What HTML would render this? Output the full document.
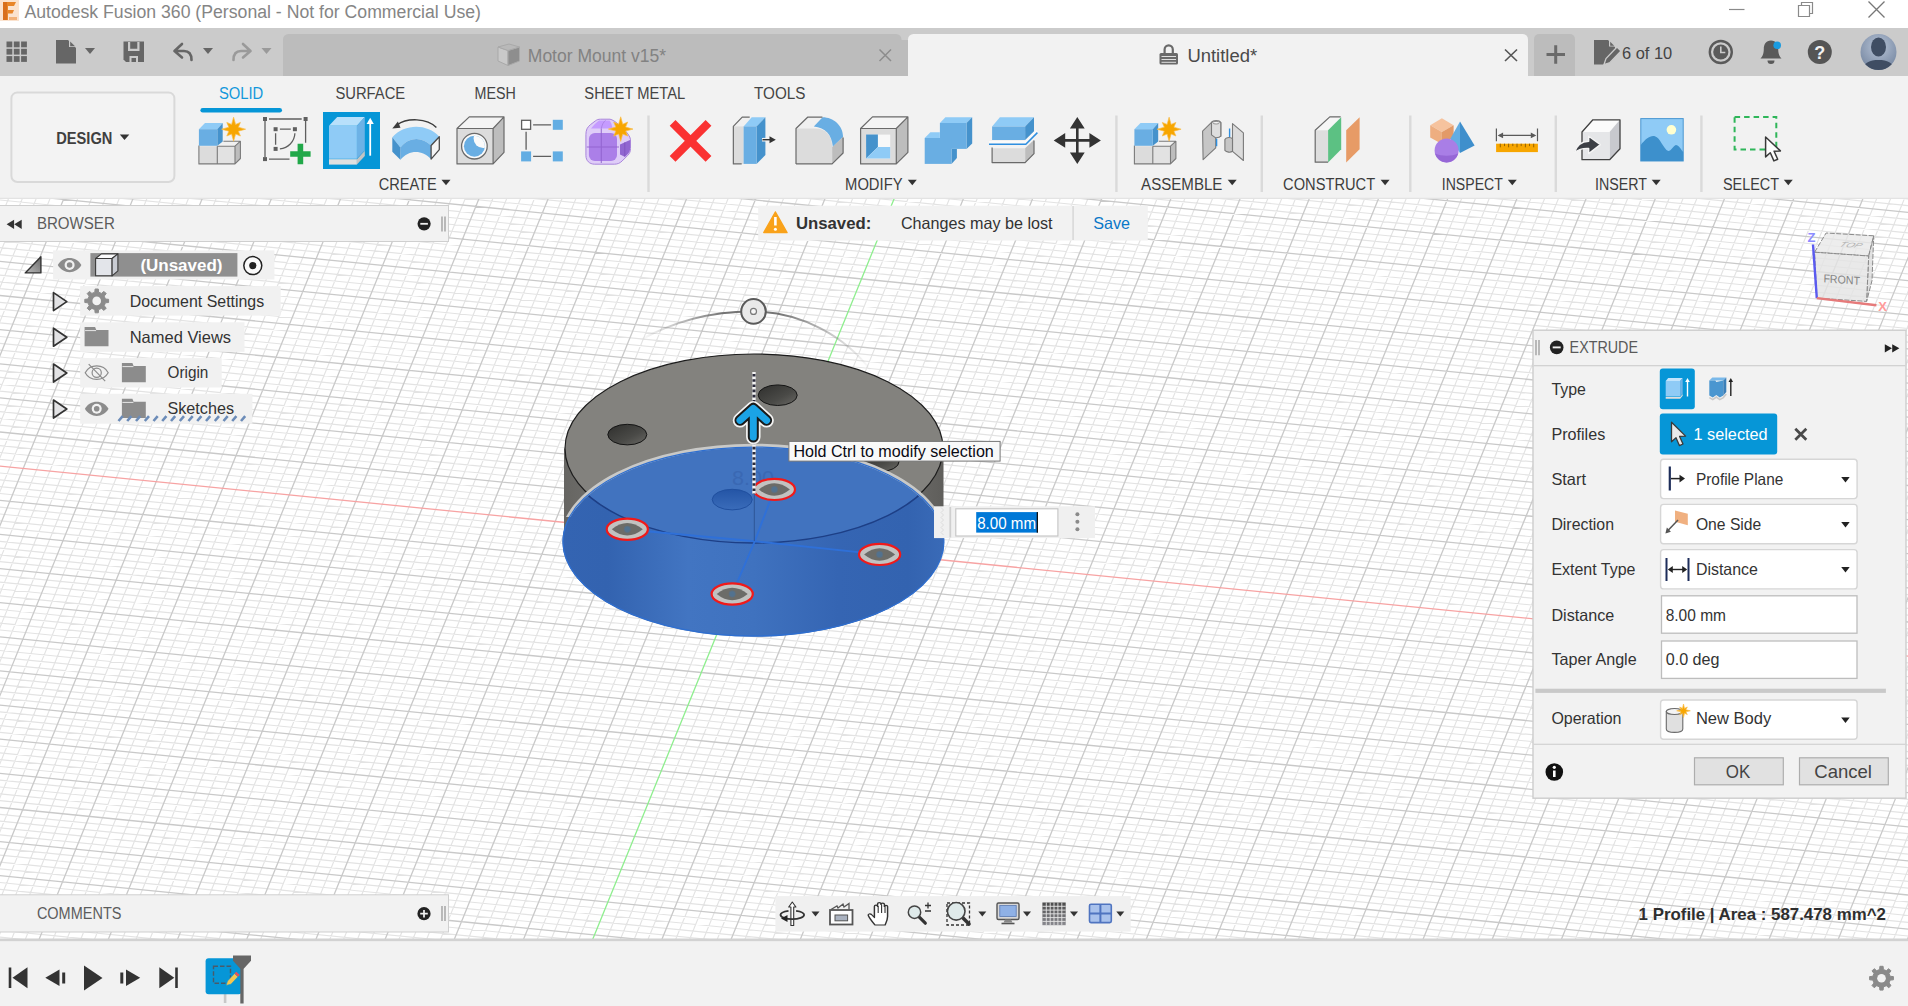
<!DOCTYPE html>
<html lang="en"><head><meta charset="utf-8"><title>Autodesk Fusion 360 (Personal - Not for Commercial Use)</title>
<style>
html,body{margin:0;padding:0;background:#fff;overflow:hidden}
body{width:1908px;height:1006px;font-family:'Liberation Sans', sans-serif}
svg{display:block;font-family:'Liberation Sans', sans-serif}
text{white-space:pre}
</style></head><body>
<svg width="1908" height="1006" viewBox="0 0 1908 1006">
<rect x="0.0" y="0.0" width="1908.0" height="1006.0" fill="#ffffff" />
<clipPath id="vp"><rect x="0" y="198" width="1908" height="742"/></clipPath>
<g clip-path="url(#vp)" fill="none">
<path d="M10.8 193.0L-295.3 945.0M24.6 193.0L-281.5 945.0M38.5 193.0L-267.6 945.0M52.3 193.0L-253.8 945.0M80.0 193.0L-226.1 945.0M93.8 193.0L-212.3 945.0M107.6 193.0L-198.4 945.0M121.5 193.0L-184.6 945.0M149.2 193.0L-156.9 945.0M163.0 193.0L-143.1 945.0M176.8 193.0L-129.2 945.0M190.7 193.0L-115.4 945.0M218.4 193.0L-87.7 945.0M232.2 193.0L-73.9 945.0M246.0 193.0L-60.0 945.0M259.9 193.0L-46.2 945.0M287.6 193.0L-18.5 945.0M301.4 193.0L-4.7 945.0M315.2 193.0L9.2 945.0M329.1 193.0L23.0 945.0M356.7 193.0L50.7 945.0M370.6 193.0L64.5 945.0M384.4 193.0L78.4 945.0M398.3 193.0L92.2 945.0M425.9 193.0L119.9 945.0M439.8 193.0L133.7 945.0M453.6 193.0L147.5 945.0M467.5 193.0L161.4 945.0M495.1 193.0L189.1 945.0M509.0 193.0L202.9 945.0M522.8 193.0L216.7 945.0M536.7 193.0L230.6 945.0M564.3 193.0L258.3 945.0M578.2 193.0L272.1 945.0M592.0 193.0L285.9 945.0M605.8 193.0L299.8 945.0M633.5 193.0L327.5 945.0M647.4 193.0L341.3 945.0M661.2 193.0L355.1 945.0M675.0 193.0L369.0 945.0M702.7 193.0L396.6 945.0M716.6 193.0L410.5 945.0M730.4 193.0L424.3 945.0M744.2 193.0L438.2 945.0M771.9 193.0L465.8 945.0M785.8 193.0L479.7 945.0M799.6 193.0L493.5 945.0M813.4 193.0L507.4 945.0M841.1 193.0L535.0 945.0M854.9 193.0L548.9 945.0M868.8 193.0L562.7 945.0M882.6 193.0L576.6 945.0M910.3 193.0L604.2 945.0M924.1 193.0L618.1 945.0M938.0 193.0L631.9 945.0M951.8 193.0L645.7 945.0M979.5 193.0L673.4 945.0M993.3 193.0L687.3 945.0M1007.2 193.0L701.1 945.0M1021.0 193.0L714.9 945.0M1048.7 193.0L742.6 945.0M1062.5 193.0L756.5 945.0M1076.4 193.0L770.3 945.0M1090.2 193.0L784.1 945.0M1117.9 193.0L811.8 945.0M1131.7 193.0L825.7 945.0M1145.6 193.0L839.5 945.0M1159.4 193.0L853.3 945.0M1187.1 193.0L881.0 945.0M1200.9 193.0L894.8 945.0M1214.8 193.0L908.7 945.0M1228.6 193.0L922.5 945.0M1256.3 193.0L950.2 945.0M1270.1 193.0L964.0 945.0M1284.0 193.0L977.9 945.0M1297.8 193.0L991.7 945.0M1325.5 193.0L1019.4 945.0M1339.3 193.0L1033.2 945.0M1353.1 193.0L1047.1 945.0M1367.0 193.0L1060.9 945.0M1394.7 193.0L1088.6 945.0M1408.5 193.0L1102.4 945.0M1422.3 193.0L1116.3 945.0M1436.2 193.0L1130.1 945.0M1463.9 193.0L1157.8 945.0M1477.7 193.0L1171.6 945.0M1491.5 193.0L1185.5 945.0M1505.4 193.0L1199.3 945.0M1533.1 193.0L1227.0 945.0M1546.9 193.0L1240.8 945.0M1560.7 193.0L1254.7 945.0M1574.6 193.0L1268.5 945.0M1602.2 193.0L1296.2 945.0M1616.1 193.0L1310.0 945.0M1629.9 193.0L1323.9 945.0M1643.8 193.0L1337.7 945.0M1671.4 193.0L1365.4 945.0M1685.3 193.0L1379.2 945.0M1699.1 193.0L1393.0 945.0M1713.0 193.0L1406.9 945.0M1740.6 193.0L1434.6 945.0M1754.5 193.0L1448.4 945.0M1768.3 193.0L1462.2 945.0M1782.2 193.0L1476.1 945.0M1809.8 193.0L1503.8 945.0M1823.7 193.0L1517.6 945.0M1837.5 193.0L1531.4 945.0M1851.3 193.0L1545.3 945.0M1879.0 193.0L1572.9 945.0M1892.9 193.0L1586.8 945.0M1906.7 193.0L1600.6 945.0M1920.5 193.0L1614.5 945.0M1948.2 193.0L1642.1 945.0M1962.1 193.0L1656.0 945.0M1975.9 193.0L1669.8 945.0M1989.7 193.0L1683.7 945.0M2017.4 193.0L1711.3 945.0M2031.3 193.0L1725.2 945.0M2045.1 193.0L1739.0 945.0M2058.9 193.0L1752.9 945.0M2086.6 193.0L1780.5 945.0M2100.4 193.0L1794.4 945.0M2114.3 193.0L1808.2 945.0M2128.1 193.0L1822.0 945.0M2155.8 193.0L1849.7 945.0M2169.6 193.0L1863.6 945.0M2183.5 193.0L1877.4 945.0M2197.3 193.0L1891.2 945.0M-5.0 8.3L1913.0 199.3M-5.0 15.2L1913.0 206.1M-5.0 28.8L1913.0 219.8M-5.0 35.6L1913.0 226.6M-5.0 42.5L1913.0 233.4M-5.0 49.3L1913.0 240.2M-5.0 63.0L1913.0 253.9M-5.0 69.8L1913.0 260.7M-5.0 76.6L1913.0 267.5M-5.0 83.4L1913.0 274.4M-5.0 97.1L1913.0 288.0M-5.0 103.9L1913.0 294.8M-5.0 110.7L1913.0 301.7M-5.0 117.6L1913.0 308.5M-5.0 131.2L1913.0 322.1M-5.0 138.0L1913.0 329.0M-5.0 144.9L1913.0 335.8M-5.0 151.7L1913.0 342.6M-5.0 165.3L1913.0 356.3M-5.0 172.2L1913.0 363.1M-5.0 179.0L1913.0 369.9M-5.0 185.8L1913.0 376.7M-5.0 199.5L1913.0 390.4M-5.0 206.3L1913.0 397.2M-5.0 213.1L1913.0 404.1M-5.0 219.9L1913.0 410.9M-5.0 233.6L1913.0 424.5M-5.0 240.4L1913.0 431.4M-5.0 247.2L1913.0 438.2M-5.0 254.1L1913.0 445.0M-5.0 267.7L1913.0 458.7M-5.0 274.6L1913.0 465.5M-5.0 281.4L1913.0 472.3M-5.0 288.2L1913.0 479.1M-5.0 301.9L1913.0 492.8M-5.0 308.7L1913.0 499.6M-5.0 315.5L1913.0 506.4M-5.0 322.3L1913.0 513.3M-5.0 336.0L1913.0 526.9M-5.0 342.8L1913.0 533.7M-5.0 349.6L1913.0 540.6M-5.0 356.5L1913.0 547.4M-5.0 370.1L1913.0 561.0M-5.0 376.9L1913.0 567.9M-5.0 383.8L1913.0 574.7M-5.0 390.6L1913.0 581.5M-5.0 404.2L1913.0 595.2M-5.0 411.1L1913.0 602.0M-5.0 417.9L1913.0 608.8M-5.0 424.7L1913.0 615.7M-5.0 438.4L1913.0 629.3M-5.0 445.2L1913.0 636.1M-5.0 452.0L1913.0 643.0M-5.0 458.8L1913.0 649.8M-5.0 472.5L1913.0 663.4M-5.0 479.3L1913.0 670.3M-5.0 486.2L1913.0 677.1M-5.0 493.0L1913.0 683.9M-5.0 506.6L1913.0 697.6M-5.0 513.5L1913.0 704.4M-5.0 520.3L1913.0 711.2M-5.0 527.1L1913.0 718.0M-5.0 540.8L1913.0 731.7M-5.0 547.6L1913.0 738.5M-5.0 554.4L1913.0 745.3M-5.0 561.2L1913.0 752.2M-5.0 574.9L1913.0 765.8M-5.0 581.7L1913.0 772.6M-5.0 588.5L1913.0 779.5M-5.0 595.4L1913.0 786.3M-5.0 609.0L1913.0 799.9M-5.0 615.8L1913.0 806.8M-5.0 622.7L1913.0 813.6M-5.0 629.5L1913.0 820.4M-5.0 643.1L1913.0 834.1M-5.0 650.0L1913.0 840.9M-5.0 656.8L1913.0 847.7M-5.0 663.6L1913.0 854.6M-5.0 677.3L1913.0 868.2M-5.0 684.1L1913.0 875.0M-5.0 690.9L1913.0 881.9M-5.0 697.7L1913.0 888.7M-5.0 711.4L1913.0 902.3M-5.0 718.2L1913.0 909.2M-5.0 725.1L1913.0 916.0M-5.0 731.9L1913.0 922.8M-5.0 745.5L1913.0 936.5M-5.0 752.4L1913.0 943.3M-5.0 759.2L1913.0 950.1M-5.0 766.0L1913.0 956.9M-5.0 779.7L1913.0 970.6M-5.0 786.5L1913.0 977.4M-5.0 793.3L1913.0 984.2M-5.0 800.1L1913.0 991.1M-5.0 813.8L1913.0 1004.7M-5.0 820.6L1913.0 1011.5M-5.0 827.4L1913.0 1018.4M-5.0 834.3L1913.0 1025.2M-5.0 847.9L1913.0 1038.9M-5.0 854.7L1913.0 1045.7M-5.0 861.6L1913.0 1052.5M-5.0 868.4L1913.0 1059.3M-5.0 882.0L1913.0 1073.0M-5.0 888.9L1913.0 1079.8M-5.0 895.7L1913.0 1086.6M-5.0 902.5L1913.0 1093.5M-5.0 916.2L1913.0 1107.1M-5.0 923.0L1913.0 1113.9M-5.0 929.8L1913.0 1120.8M-5.0 936.7L1913.0 1127.6" stroke="#e3e3e3" stroke-width="1.150"/>
<path d="M-3.1 193.0L-309.1 945.0M66.1 193.0L-239.9 945.0M135.3 193.0L-170.7 945.0M204.5 193.0L-101.6 945.0M273.7 193.0L-32.4 945.0M342.9 193.0L36.8 945.0M412.1 193.0L106.0 945.0M481.3 193.0L175.2 945.0M550.5 193.0L244.4 945.0M619.7 193.0L313.6 945.0M688.9 193.0L382.8 945.0M758.1 193.0L452.0 945.0M827.3 193.0L521.2 945.0M965.7 193.0L659.6 945.0M1034.9 193.0L728.8 945.0M1104.0 193.0L798.0 945.0M1173.2 193.0L867.2 945.0M1242.4 193.0L936.4 945.0M1311.6 193.0L1005.6 945.0M1380.8 193.0L1074.8 945.0M1450.0 193.0L1143.9 945.0M1519.2 193.0L1213.1 945.0M1588.4 193.0L1282.3 945.0M1657.6 193.0L1351.5 945.0M1726.8 193.0L1420.7 945.0M1796.0 193.0L1489.9 945.0M1865.2 193.0L1559.1 945.0M1934.4 193.0L1628.3 945.0M2003.6 193.0L1697.5 945.0M2072.8 193.0L1766.7 945.0M2142.0 193.0L1835.9 945.0M2211.2 193.0L1905.1 945.0M-5.0 22.0L1913.0 212.9M-5.0 56.1L1913.0 247.1M-5.0 90.3L1913.0 281.2M-5.0 124.4L1913.0 315.3M-5.0 158.5L1913.0 349.4M-5.0 192.6L1913.0 383.6M-5.0 226.8L1913.0 417.7M-5.0 260.9L1913.0 451.8M-5.0 295.0L1913.0 486.0M-5.0 329.2L1913.0 520.1M-5.0 363.3L1913.0 554.2M-5.0 397.4L1913.0 588.3M-5.0 431.5L1913.0 622.5M-5.0 499.8L1913.0 690.7M-5.0 533.9L1913.0 724.9M-5.0 568.1L1913.0 759.0M-5.0 602.2L1913.0 793.1M-5.0 636.3L1913.0 827.3M-5.0 670.4L1913.0 861.4M-5.0 704.6L1913.0 895.5M-5.0 738.7L1913.0 929.6M-5.0 772.8L1913.0 963.8M-5.0 807.0L1913.0 997.9M-5.0 841.1L1913.0 1032.0M-5.0 875.2L1913.0 1066.2M-5.0 909.3L1913.0 1100.3M-5.0 943.5L1913.0 1134.4" stroke="#c9c9c9" stroke-width="1.300"/>
<path d="M-12545.3 -782.7L14054.7 1865.3" stroke="#f7a3a3" stroke-width="1.3"/>
<path d="M3424.7 -6018.7L-1915.3 7101.3" stroke="#8eee8e" stroke-width="1.3"/>
</g>
<defs><linearGradient id="side" x1="0" x2="1" y1="0" y2="0"><stop offset="0" stop-color="#666562"/><stop offset="0.18" stop-color="#7a7975"/><stop offset="0.5" stop-color="#8a8985"/><stop offset="0.85" stop-color="#73726f"/><stop offset="1" stop-color="#5f5e5b"/></linearGradient><linearGradient id="bside" x1="0" x2="1" y1="0" y2="0"><stop offset="0" stop-color="#3464b2"/><stop offset="0.12" stop-color="#3363b0"/><stop offset="0.33" stop-color="#4275c2"/><stop offset="0.5" stop-color="#3f72bf"/><stop offset="0.72" stop-color="#3565b3"/><stop offset="0.9" stop-color="#3363b0"/><stop offset="1" stop-color="#3a6bb8"/></linearGradient><linearGradient id="hole" x1="0" x2="1" y1="0" y2="1"><stop offset="0" stop-color="#2f2f2d"/><stop offset="0.6" stop-color="#4a4a47"/><stop offset="1" stop-color="#6a6965"/></linearGradient><clipPath id="bell"><ellipse cx="753.2" cy="541.5" rx="190.8" ry="95.3"/></clipPath></defs>
<defs><linearGradient id="arcg" x1="0" x2="1"><stop offset="0" stop-color="#777" stop-opacity="0"/><stop offset="0.35" stop-color="#666" stop-opacity="0.9"/><stop offset="0.6" stop-color="#666" stop-opacity="0.9"/><stop offset="1" stop-color="#777" stop-opacity="0"/></linearGradient></defs>
<path d="M640 340C680 318 720 311 753.500 311.400C800 312 845 335 872 372" fill="none" stroke="url(#arcg)" stroke-width="2"/>
<path d="M564.0 448.5V541.5A189.5 94.5 0 0 0 943.5 541.5V448.5z" fill="url(#side)"/>
<ellipse cx="754.0" cy="448.5" rx="189.0" ry="94.5" fill="#83827e" stroke="#1c1c1c" stroke-width="1.200"/>
<ellipse cx="777.7" cy="395.2" rx="19.500" ry="10.300" fill="url(#hole)" stroke="#151515" stroke-width="1"/>
<ellipse cx="627.3" cy="434.6" rx="19.500" ry="10.300" fill="url(#hole)" stroke="#151515" stroke-width="1"/>
<ellipse cx="879.6" cy="461.4" rx="19.500" ry="10.300" fill="url(#hole)" stroke="#151515" stroke-width="1"/>
<g clip-path="url(#bell)">
<rect x="561.0" y="445.0" width="385.0" height="193.0" fill="url(#bside)"/>
<ellipse cx="753.5" cy="448.5" rx="190.5" ry="94.5" fill="#4173bf" stroke="#1d3f86" stroke-width="1.500"/>
<defs><linearGradient id="bh" x1="0" x2="0" y1="0" y2="1"><stop offset="0" stop-color="#2455a6"/><stop offset="1" stop-color="#3a6cba"/></linearGradient></defs><ellipse cx="732.200" cy="499.600" rx="20" ry="10.300" fill="url(#bh)" stroke="#21509f" stroke-width="1"/>
<text x="732" y="485" font-size="21" fill="#3a68b3" textLength="42" lengthAdjust="spacingAndGlyphs">8.00</text>
<path d="M754.700 541.300L774.400 489.400M754.700 541.300L627.600 529.500M754.700 541.300L879.600 554.400M754.700 541.300L732.200 594" stroke="#2f70d8" stroke-width="1.900" fill="none"/>
<path d="M754.300 492V541" stroke="#2d5597" stroke-width="1"/>
</g>
<clipPath id="rimc"><rect x="500" y="400" width="500" height="117"/></clipPath>
<path d="M561.8 541.5A191.7 95.9 0 0 1 945.2 541.5" fill="none" stroke="#c9c9c7" stroke-width="3.800" clip-path="url(#rimc)"/>
<path d="M563.0 541.5A190.5 94.5 0 0 1 944.0 541.5" fill="none" stroke="#2f6fd0" stroke-width="1.200"/>
<path d="M563.0 541.5A190.5 94.5 0 0 0 944.0 541.5" fill="none" stroke="#2f6fd0" stroke-width="1.200"/>
<ellipse cx="774.4" cy="489.4" rx="20.600" ry="10.600" fill="#c2c2c0" stroke="#f01a1a" stroke-width="2.200"/>
<path d="M758.9 489.4Q774.4 476.9 789.9 489.4Q774.4 501.9 758.9 489.4z" fill="#6c6c68"/>
<circle cx="774.4" cy="489.4" r="3.200" fill="#52728f" stroke="#5f6f7c" stroke-width="0.800"/>
<ellipse cx="627.3" cy="529.3" rx="20.600" ry="10.600" fill="#c2c2c0" stroke="#f01a1a" stroke-width="2.200"/>
<path d="M611.8 529.3Q627.3 516.8 642.8 529.3Q627.3 541.8 611.8 529.3z" fill="#6c6c68"/>
<circle cx="627.3" cy="529.3" r="3.200" fill="#52728f" stroke="#5f6f7c" stroke-width="0.800"/>
<ellipse cx="879.6" cy="554.4" rx="20.600" ry="10.600" fill="#c2c2c0" stroke="#f01a1a" stroke-width="2.200"/>
<path d="M864.1 554.4Q879.6 541.9 895.1 554.4Q879.6 566.9 864.1 554.4z" fill="#6c6c68"/>
<circle cx="879.6" cy="554.4" r="3.200" fill="#52728f" stroke="#5f6f7c" stroke-width="0.800"/>
<ellipse cx="732.2" cy="594" rx="20.600" ry="10.600" fill="#c2c2c0" stroke="#f01a1a" stroke-width="2.200"/>
<path d="M716.7 594.0Q732.2 581.5 747.7 594.0Q732.2 606.5 716.7 594.0z" fill="#6c6c68"/>
<circle cx="732.2" cy="594" r="3.200" fill="#52728f" stroke="#5f6f7c" stroke-width="0.800"/>
<path d="M754 372V494" stroke="#f4f4f4" stroke-width="3.400"/>
<path d="M754 374V494" stroke="#2a2a3a" stroke-width="3" stroke-dasharray="2.600 2.600"/>
<path d="M740 420.300L753.300 408.300L766.600 420.300M753.300 409V437" fill="none" stroke="#ffffff" stroke-width="14.500" stroke-linecap="round" stroke-linejoin="round" stroke-opacity="0.9"/>
<path d="M740 420.300L753.300 408.300L766.600 420.300M753.300 409V437" fill="none" stroke="#1a1a1a" stroke-width="11" stroke-linecap="round" stroke-linejoin="round"/>
<path d="M740 420.300L753.300 408.300L766.600 420.300M753.300 409V437" fill="none" stroke="#1ba3e6" stroke-width="7" stroke-linecap="round" stroke-linejoin="round"/>
<circle cx="753.500" cy="311.400" r="12.300" fill="#e9e9e9" stroke="#5a5a5a" stroke-width="2"/><circle cx="753.500" cy="311.400" r="3" fill="#f6f6f6" stroke="#7a7a7a" stroke-width="1.200"/>
<rect x="0.0" y="0.0" width="1908.0" height="28.0" fill="#ffffff" />
<rect x="0.0" y="28.0" width="1908.0" height="48.0" fill="#cbcbcb" />
<rect x="0.0" y="76.0" width="1908.0" height="121.5" fill="#f2f2f2" />
<rect x="0.0" y="197.5" width="1908.0" height="1.5" fill="#e3e3e3" />
<g><rect x="0" y="0" width="19" height="21" fill="#fbe3cf"/><path d="M3 2h13l-2 4h-6v4h6l-1.5 3.5h-4.5v6.5h-5z" fill="#e8862a"/><path d="M3 2h4v18h-4z" fill="#d96f1c"/><rect x="9" y="17" width="8" height="3" fill="#f3b27a"/></g>
<text x="24.5" y="17.8" font-size="17.6" textLength="456.5" lengthAdjust="spacingAndGlyphs" fill="#858585" font-weight="normal" >Autodesk Fusion 360 (Personal - Not for Commercial Use)</text>
<path d="M1729 9.5h15.5" stroke="#8a8a8a" stroke-width="1.2" fill="none"/>
<path d="M1798.5 5.5h11v11h-11zM1801.5 5.5v-3h11v11h-3" stroke="#8a8a8a" stroke-width="1.2" fill="none"/>
<path d="M1868.5 1.5l16 16M1884.5 1.5l-16 16" stroke="#777" stroke-width="1.3" fill="none"/>
<rect x="6.5" y="41.5" width="5.8" height="5.8" fill="#666666" />
<rect x="6.5" y="48.8" width="5.8" height="5.8" fill="#666666" />
<rect x="6.5" y="56.1" width="5.8" height="5.8" fill="#666666" />
<rect x="13.8" y="41.5" width="5.8" height="5.8" fill="#666666" />
<rect x="13.8" y="48.8" width="5.8" height="5.8" fill="#666666" />
<rect x="13.8" y="56.1" width="5.8" height="5.8" fill="#666666" />
<rect x="21.1" y="41.5" width="5.8" height="5.8" fill="#666666" />
<rect x="21.1" y="48.8" width="5.8" height="5.8" fill="#666666" />
<rect x="21.1" y="56.1" width="5.8" height="5.8" fill="#666666" />
<path d="M56 40h12l8 8v15.5h-20z" fill="#666666"/><path d="M69 40v7h7z" fill="#cbcbcb"/><path d="M70.2 41.5l4.8 4.8h-4.8z" fill="#666666"/>
<path d="M85.0 48.0h10l-5.0 6z" fill="#666666"/>
<path d="M123.5 41.5h20.5v20.5h-18l-2.5-2.500z" fill="#666666"/><path d="M128 42v9h11.500v-9h-2.2v6.8h-7.1v-6.800z" fill="#cbcbcb"/><path d="M129.5 62v-6h8.5v6h-2v-4h-4.5v4z" fill="#cbcbcb"/>
<path d="M174.500 51l7.500-7M174.500 51l7.500 6.500M175 51h9c5 0 7.500 3.500 7.500 9" stroke="#666666" stroke-width="2.6" fill="none" stroke-linecap="round" stroke-linejoin="round"/>
<path d="M203.0 48.0h10l-5.0 6z" fill="#666666"/>
<path d="M250.500 51l-7.500-7M250.500 51l-7.500 6.500M250 51h-9c-5 0-7.500 3.500-7.500 9" stroke="#9a9a9a" stroke-width="2.6" fill="none" stroke-linecap="round" stroke-linejoin="round"/>
<path d="M261.5 48.0h10l-5.0 6z" fill="#9a9a9a"/>
<path d="M283 76v-36.500a5.500 5.500 0 0 1 5.500-5.500h607.500a5.500 5.500 0 0 1 5.500 5.500v36.500z" fill="#bcbcbc"/>
<g stroke="#a9a9a9" stroke-width="1" stroke-linejoin="round"><path d="M498 47l10 3.500v15l-10-4.500z" fill="#c9c9c9"/><path d="M508 50.500l11.500-3.500v14l-11.500 4.500z" fill="#8e8e8e"/><path d="M498 47l11-3 10.500 3-11.500 3.500z" fill="#b9b9b9"/></g>
<text x="527.8" y="62.0" font-size="17.5" textLength="138.2" lengthAdjust="spacingAndGlyphs" fill="#828282" font-weight="normal" >Motor Mount v15*</text>
<path d="M879.500 49.500l11.500 11.500M891 49.500l-11.500 11.500" stroke="#8c8c8c" stroke-width="1.500" fill="none"/>
<rect x="901.0" y="40.0" width="7.5" height="36.0" fill="#bcbcbc" />
<path d="M908 76v-36.500a5.500 5.500 0 0 1 5.500-5.500h609a5.500 5.500 0 0 1 5.500 5.500v36.500z" fill="#f2f2f2"/>
<g fill="#6a6a6a"><path d="M1163.500 53v-3.500a5.200 5.200 0 0 1 10.400 0v3.500h-2.200v-3.500a3 3 0 0 0-6 0v3.500z"/><rect x="1159.500" y="53" width="18.500" height="11.500" rx="1.500"/></g><path d="M1161.500 56.500h14.500M1161.500 59.500h14.500M1161.500 62.300h14.500" stroke="#e0e0e0" stroke-width="1"/>
<text x="1187.4" y="62.0" font-size="17.5" textLength="69.8" lengthAdjust="spacingAndGlyphs" fill="#4a4a4a" font-weight="normal" >Untitled*</text>
<path d="M1505 49.500l12 11.500M1517 49.500l-12 11.500" stroke="#555" stroke-width="1.600" fill="none"/>
<path d="M1534 76v-37a5 5 0 0 1 5-5h31a5 5 0 0 1 5 5v37z" fill="#bcbcbc"/>
<path d="M1546.500 54.500h18.500M1555.700 45.300v18.500" stroke="#6a6a6a" stroke-width="3" fill="none"/>
<g fill="#666"><path d="M1594 40h14l7 7v4l-9 9.500-2.500 4h-9.500z"/></g><path d="M1609 40v6.500h6.500z" fill="#cbcbcb"/><path d="M1610.200 41.800l4 4h-4z" fill="#666"/><path d="M1604 64.500l2-6 11-11.500 4 4-11 11.500z" fill="#666" stroke="#cbcbcb" stroke-width="1.300"/>
<text x="1622.0" y="58.7" font-size="16.5" textLength="50.2" lengthAdjust="spacingAndGlyphs" fill="#444" font-weight="normal" >6 of 10</text>
<circle cx="1720.800" cy="52" r="11" fill="none" stroke="#5a5a5a" stroke-width="2.400"/><circle cx="1720.800" cy="52" r="7.600" fill="#5a5a5a"/><path d="M1720.800 46.500v6h4.500" stroke="#cbcbcb" stroke-width="1.600" fill="none"/>
<path d="M1771 40.500c-5 0-7.200 4-7.200 8.500 0 5-1.500 7.500-3.300 9.500h21c-1.800-2-3.300-4.500-3.300-9.500 0-4.500-2.200-8.500-7.200-8.500z" fill="#5a5a5a"/><path d="M1767.500 60.500a3.500 3.500 0 0 0 7 0z" fill="#5a5a5a"/><circle cx="1777.200" cy="45.300" r="3.800" fill="#1a9be0"/>
<circle cx="1819.800" cy="52" r="12" fill="#555"/>
<text x="1819.800" y="58.500" font-size="18" font-weight="bold" fill="#f2f2f2" text-anchor="middle">?</text>
<defs><radialGradient id="av" cx="0.5" cy="0.35" r="0.75"><stop offset="0" stop-color="#b7c3d6"/><stop offset="1" stop-color="#6f819c"/></radialGradient><clipPath id="avc"><circle cx="1878.500" cy="52" r="18"/></clipPath></defs>
<circle cx="1878.500" cy="52" r="18" fill="url(#av)"/><g clip-path="url(#avc)" fill="#3f4d63"><ellipse cx="1878.500" cy="47" rx="7.500" ry="9.500"/><path d="M1862 72c1-9 7-12 16.500-12s15.500 3 16.500 12z"/></g>
<rect x="11.4" y="92.4" width="163.0" height="89.6" fill="#f3f3f3" stroke="#d9d9d9" stroke-width="2" rx="6" />
<text x="56.2" y="143.6" font-size="17" textLength="56.2" lengthAdjust="spacingAndGlyphs" fill="#3f3f3f" font-weight="bold" >DESIGN</text>
<path d="M119.8 134.6h9.5l-4.8 5.5z" fill="#333"/>
<text x="218.9" y="98.8" font-size="16.8" textLength="44.4" lengthAdjust="spacingAndGlyphs" fill="#1398db" font-weight="normal" >SOLID</text>
<rect x="200.4" y="107.9" width="81.6" height="4.6" fill="#0696d7" rx="2.3" />
<text x="335.4" y="98.8" font-size="16.8" textLength="69.8" lengthAdjust="spacingAndGlyphs" fill="#444" font-weight="normal" >SURFACE</text>
<text x="474.6" y="98.8" font-size="16.8" textLength="41.3" lengthAdjust="spacingAndGlyphs" fill="#444" font-weight="normal" >MESH</text>
<text x="584.3" y="98.8" font-size="16.8" textLength="101.0" lengthAdjust="spacingAndGlyphs" fill="#444" font-weight="normal" >SHEET METAL</text>
<text x="754.0" y="98.8" font-size="16.8" textLength="51.4" lengthAdjust="spacingAndGlyphs" fill="#444" font-weight="normal" >TOOLS</text>
<text x="378.7" y="190.0" font-size="16.8" textLength="58.0" lengthAdjust="spacingAndGlyphs" fill="#3c3c3c" font-weight="normal" >CREATE</text>
<path d="M441.5 179.8h9l-4.5 5.5z" fill="#333"/>
<text x="845.1" y="190.0" font-size="16.8" textLength="57.4" lengthAdjust="spacingAndGlyphs" fill="#3c3c3c" font-weight="normal" >MODIFY</text>
<path d="M907.8 179.8h9l-4.5 5.5z" fill="#333"/>
<text x="1141.1" y="190.0" font-size="16.8" textLength="81.3" lengthAdjust="spacingAndGlyphs" fill="#3c3c3c" font-weight="normal" >ASSEMBLE</text>
<path d="M1227.7 179.8h9l-4.5 5.5z" fill="#333"/>
<text x="1283.1" y="190.0" font-size="16.8" textLength="92.0" lengthAdjust="spacingAndGlyphs" fill="#3c3c3c" font-weight="normal" >CONSTRUCT</text>
<path d="M1380.6 179.8h9l-4.5 5.5z" fill="#333"/>
<text x="1441.8" y="190.0" font-size="16.8" textLength="61.0" lengthAdjust="spacingAndGlyphs" fill="#3c3c3c" font-weight="normal" >INSPECT</text>
<path d="M1507.8 179.8h9l-4.5 5.5z" fill="#333"/>
<text x="1595.0" y="190.0" font-size="16.8" textLength="52.0" lengthAdjust="spacingAndGlyphs" fill="#3c3c3c" font-weight="normal" >INSERT</text>
<path d="M1651.7 179.8h9l-4.5 5.5z" fill="#333"/>
<text x="1722.9" y="190.0" font-size="16.8" textLength="56.2" lengthAdjust="spacingAndGlyphs" fill="#3c3c3c" font-weight="normal" >SELECT</text>
<path d="M1783.8 179.8h9l-4.5 5.5z" fill="#333"/>
<rect x="647.3" y="115.5" width="2.4" height="76.5" fill="#dadada" />
<rect x="1115.2" y="115.5" width="2.4" height="76.5" fill="#dadada" />
<rect x="1260.6" y="115.5" width="2.4" height="76.5" fill="#dadada" />
<rect x="1409.1" y="115.5" width="2.4" height="76.5" fill="#dadada" />
<rect x="1554.6" y="115.5" width="2.4" height="76.5" fill="#dadada" />
<rect x="1700.2" y="115.5" width="2.4" height="76.5" fill="#dadada" />
<g transform="translate(198.9 117.0)"><path d="M18.4 29.2L23.8 24.2L41.5 24.2L36.1 29.2z" fill="#f0f0f0" /><path d="M36.1 29.2L41.5 24.2L41.5 41.5L36.1 46.9z" fill="#bdbdbd" /><path d="M0.0 29.2L18.4 29.2L18.4 46.9L0.0 46.9z" fill="#dcdcdc" /><path d="M18.4 29.2L36.1 29.2L36.1 46.9L18.4 46.9z" fill="#e2e2e2" /><path d="M0 28.500v18.400h36.100l5.400-5.400v-17.300h-17M18.400 29.200v17.700M36.100 29.200v17.700M18.400 29.200h17.700l5.400-5" fill="none" stroke="#7a7a7a" stroke-width="1.1" stroke-linejoin="round"/><path d="M0.0 12.2L6.1 6.0L23.8 6.0L18.4 12.2z" fill="#8fcbf6" /><path d="M18.4 12.2L23.8 6.0L23.8 24.4L18.4 28.8z" fill="#4592cc" /><path d="M0.0 12.2L18.4 12.2L18.4 28.8L0.0 28.8z" fill="#69aee3" /><path d="M34.7 0.2L36.7 7.4L41.5 5.4L39.5 10.2L46.7 12.2L39.5 14.2L41.5 19.0L36.7 17.0L34.7 24.2L32.7 17.0L27.9 19.0L29.9 14.2L22.7 12.2L29.9 10.2L27.9 5.4L32.7 7.4z" fill="#f7a600" stroke="#f9bd4a" stroke-width="0.7" stroke-linejoin="round" /></g>
<g transform="translate(260.0 115.0)"><g stroke="#5f5f5f" stroke-width="1.300" fill="none"><path d="M9 4h32.700M5 6v36M45.600 6v21.800M9 44.100h20.500"/><path d="M19.900 14.200h10.900M15.600 18.300v11.500M34.900 18.300C34.500 27 28 33 19.900 33.900"/></g><rect x="3.0" y="2.0" width="4" height="4" fill="#5f5f5f"/><rect x="43.6" y="2.0" width="4" height="4" fill="#5f5f5f"/><rect x="3.0" y="42.1" width="4" height="4" fill="#5f5f5f"/><rect x="13.6" y="12.2" width="4" height="4" fill="#5f5f5f"/><rect x="32.9" y="12.2" width="4" height="4" fill="#5f5f5f"/><rect x="13.6" y="31.9" width="4" height="4" fill="#5f5f5f"/><path d="M37.600 28.800h5.600v7.400h7.400v5.600h-7.400v7.400h-5.600v-7.400h-7.400v-5.600h7.400z" fill="#21a849"/></g>
<g transform="translate(323.0 112.0)"><rect x="0" y="0" width="57" height="57" fill="#0696d7"/><path d="M6.0 13.8L14.2 4.9L41.8 4.9L33.9 13.8z" fill="#b8e0fb" /><path d="M33.9 13.8L41.8 4.9L41.8 38.3L33.9 46.8z" fill="#6db2e6" /><path d="M6.0 13.8L33.9 13.8L33.9 46.8L6.0 46.8z" fill="#8fcbf6" /><path d="M6.0 47.2L33.9 47.2L33.9 52.6L6.0 52.6z" fill="#e0e0e0" /><path d="M33.9 47.2L41.8 38.8L41.8 43.9L33.9 52.6z" fill="#c4c4c4" /><path d="M47.200 10v33.700" stroke="#fff" stroke-width="1.800"/><path d="M47.200 5.800l3.600 6.200h-7.200z" fill="#fff"/></g>
<g transform="translate(391.0 117.0)"><path d="M45.400 10.500C36 1 16 0.500 6 8" fill="none" stroke="#3c3c3c" stroke-width="1.400"/><path d="M1.300 11.500l5.600-7 2.600 6.300z" fill="#3c3c3c"/><path d="M1.300 20.300C14 6.500 36 6.500 48.300 19.700L40.100 28.500C31 19.500 18 19.500 9.400 30.600z" fill="#8fcbf6"/><path d="M9.400 30.600C18 19.500 31 19.500 40.100 28.500V42.100C31 32.500 18 32.500 9.400 42.800z" fill="#69aee3"/><path d="M1.3 20.3L9.4 30.6L9.4 42.8L1.3 34.7z" fill="#4592cc" /><path d="M40.1 28.5L48.3 19.7L48.3 32.6L40.1 42.1z" fill="#f4f4f4" stroke="#4a4a4a" stroke-width="1.3" stroke-linejoin="round" /></g>
<g transform="translate(456.6 116.6)"><path d="M0.4 11.9L12.7 0.3L47.4 0.3L36.5 11.9z" fill="#f4f4f4" /><path d="M36.5 11.9L47.4 0.3L47.4 35.7L36.5 47.3z" fill="#bdbdbd" /><path d="M0.4 11.9L36.5 11.9L36.5 47.3L0.4 47.3z" fill="#dcdcdc" /><path d="M0.400 11.900L12.700 0.300H47.400V35.700L36.500 47.300H0.400zM0.400 11.900H36.500V47.300M36.500 11.900L47.400 0.300" fill="none" stroke="#6a6a6a" stroke-width="1.200" stroke-linejoin="round"/><circle cx="17.800" cy="29.600" r="12.800" fill="#fafafa" stroke="#6a6a6a" stroke-width="1.300"/><clipPath id="hc456"><circle cx="17.800" cy="29.600" r="10.500"/></clipPath><circle cx="17.800" cy="29.600" r="10.500" fill="#69aee3"/><circle cx="26.500" cy="22" r="9.500" fill="#fafafa" clip-path="url(#hc456)"/></g>
<g transform="translate(526.1 124.8)"><path d="M7 0h18M0 7v18M7 31.600h18" stroke="#5f5f5f" stroke-width="1.300" fill="none"/><rect x="-4.500" y="-4.500" width="9" height="9" fill="#fff" stroke="#5f5f5f" stroke-width="1.300"/><rect x="26.7" y="-5.0" width="10" height="10" fill="#62ade3"/><rect x="-5.0" y="26.6" width="10" height="10" fill="#62ade3"/><rect x="26.7" y="26.6" width="10" height="10" fill="#62ade3"/></g>
<g transform="translate(585.0 117.6)"><path d="M0.900 17C0.900 12 2.500 9.500 5.500 7L10.500 3.200C12 2 13.500 1.600 15.500 1.600H25C29 1.600 45.500 16 45.500 22V31C45.500 34 44.500 36 42.500 38L37 43.500C35 45.500 32.500 46.600 29.500 46.600H9.500C4.500 46.600 0.900 43 0.900 38z" fill="#dfcdf8" stroke="#a27bd8" stroke-width="0.900"/><path d="M6 11C8 8 11 5 14.100 2.800H24.500C26 4.500 27 7 27.500 10.900z" fill="#c59bff"/><rect x="3.900" y="15.500" width="28.100" height="28" rx="6" fill="#ab7fe8"/><path d="M35 27L45 22.300V32.400C44.500 35 42 37.500 39.700 39.200L35 36.800z" fill="#9166d1"/><path d="M39.800 24.800V39" stroke="#7f55c0" stroke-width="0.900"/><path d="M16.300 11V45.500M1.800 29.400H34" stroke="#8f62cc" stroke-width="1.100" fill="none" opacity="0.850"/><path d="M16.300 11C17 7 18.500 4.500 20.500 2.800" stroke="#a982e0" stroke-width="0.900" fill="none"/><path d="M35.7 -0.8L37.7 6.6L42.7 4.5L40.6 9.5L48.0 11.5L40.6 13.5L42.7 18.5L37.7 16.4L35.7 23.8L33.7 16.4L28.7 18.5L30.8 13.5L23.4 11.5L30.8 9.5L28.7 4.5L33.7 6.6z" fill="#f7a600" stroke="#f9bd4a" stroke-width="0.7" stroke-linejoin="round" /></g>
<g transform="translate(669.3 119.6)"><path d="M3.300 3.300l35.900 35.900M39.200 3.300l-35.900 35.900" stroke="#fa3232" stroke-width="8.200" fill="none"/></g>
<g transform="translate(732.7 116.6)"><path d="M0.7 9.8L9.5 0.6L19.0 0.6L10.9 9.8z" fill="#f0f0f0" /><path d="M0.7 9.8L10.9 9.8L10.9 47.3L0.7 47.3z" fill="#dcdcdc" /><path d="M9 47.300H0.650V9.800L9.500 0.600H17" fill="none" stroke="#6a6a6a" stroke-width="1.200" stroke-linejoin="round"/><path d="M10.9 9.8L19.0 0.6L32.7 0.6L23.8 9.8z" fill="#8fcbf6" /><path d="M23.8 9.8L32.7 0.6L32.7 38.5L23.8 47.3z" fill="#4592cc" /><path d="M10.9 9.8L23.8 9.8L23.8 47.3L10.9 47.3z" fill="#69aee3" /><path d="M29.300 23.100h9" stroke="#f2f2f2" stroke-width="3.600"/><path d="M29.800 23.100h9" stroke="#333" stroke-width="1.400"/><path d="M36.800 19.600l6.300 3.500-6.300 3.500z" fill="#333"/></g>
<g transform="translate(795.4 116.6)"><path d="M0.6 11.9L12.2 0.6L27.2 0.6L18.4 9.8L18.4 11.9z" fill="#f0f0f0" /><path d="M36.7 30.3L47.7 20.1L47.7 36.4L36.7 47.3z" fill="#bdbdbd" /><path d="M0.600 47.300V11.900H20.400C30 11.900 36.700 19 36.700 30.300V47.300z" fill="#dcdcdc"/><path d="M18.400 9.800L27.200 0.600C38 0.600 47.700 9 47.700 20.100L37.400 30C36.500 18 30 11 18.400 9.800z" fill="#69aee3"/><path d="M0.600 47.300V11.900L12.200 0.600H27M0.600 47.300H36.700L47.700 36.400V21" fill="none" stroke="#6a6a6a" stroke-width="1.200" stroke-linejoin="round"/></g>
<g transform="translate(859.8 116.6)"><path d="M0.8 11.9L12.7 0.3L48.1 0.3L36.5 11.9z" fill="#f4f4f4" /><path d="M36.5 11.9L48.1 0.3L48.1 35.7L36.5 47.3z" fill="#bdbdbd" /><path d="M0.8 11.9L36.5 11.9L36.5 47.3L0.8 47.3z" fill="#dcdcdc" /><path d="M0.800 11.900L12.700 0.300H48.100V35.700L36.500 47.300H0.800zM0.800 11.900H36.500V47.300M36.500 11.900L48.100 0.300" fill="none" stroke="#6a6a6a" stroke-width="1.200" stroke-linejoin="round"/><rect x="6.300" y="18" width="24.100" height="23.900" fill="#f8f8f8"/><path d="M6.3 18.0L18.1 18.0L18.1 30.3L6.3 41.9z" fill="#4592cc" /><path d="M18.1 30.3L30.4 30.3L30.4 41.9L6.3 41.9z" fill="#8fcbf6" /></g>
<g transform="translate(924.3 116.6)"><path d="M15.6 6.4L21.1 0.6L47.9 0.6L42.2 6.4z" fill="#8fcbf6" /><path d="M42.2 6.4L47.9 0.6L47.9 26.9L42.2 32.3z" fill="#4592cc" /><path d="M15.6 6.4L42.2 6.4L42.2 32.3L15.6 32.3z" fill="#69aee3" /><path d="M0.4 21.4L6.1 15.6L15.6 15.6L15.6 21.4z" fill="#8fcbf6" /><path d="M27.2 32.3L32.6 32.3L32.6 41.5L27.2 47.3z" fill="#4592cc" /><path d="M0.4 21.4L27.2 21.4L27.2 47.3L0.4 47.3z" fill="#69aee3" /></g>
<g transform="translate(989.0 116.6)"><path d="M3.1 9.8L10.9 0.6L45.0 0.6L36.1 9.8z" fill="#8fcbf6" /><path d="M36.1 9.8L45.0 0.6L45.0 14.6L36.1 23.5z" fill="#4592cc" /><path d="M3.1 9.8L36.1 9.8L36.1 23.5L3.1 23.5z" fill="#69aee3" /><path d="M36.1 31.6L45.0 23.5L45.0 37.1L36.1 46.0z" fill="#bdbdbd" /><path d="M3.1 31.6L36.1 31.6L36.1 46.0L3.1 46.0z" fill="#dcdcdc" /><path d="M3.100 31V46H36.100L45 37.100V24" fill="none" stroke="#6a6a6a" stroke-width="1.200" stroke-linejoin="round"/><path d="M0 25.500H36.500L48 14" fill="none" stroke="#fafafa" stroke-width="2.400"/><path d="M0 27.600H36.800L48.400 16" fill="none" stroke="#2f8fe0" stroke-width="1.500"/></g>
<g transform="translate(1053.7 116.9)"><path d="M23.600 8v31M8 23.500h31" stroke="#333" stroke-width="2.600"/><path d="M23.600 0l7.400 11.500h-14.800zM23.600 47l7.400-11.500h-14.800zM0 23.500l11.500-7.400v14.800zM47.200 23.500l-11.500-7.400v14.800z" fill="#333"/></g>
<g transform="translate(1134.4 117.0)"><path d="M18.4 29.2L23.8 24.2L41.5 24.2L36.1 29.2z" fill="#f0f0f0" /><path d="M36.1 29.2L41.5 24.2L41.5 41.5L36.1 46.9z" fill="#bdbdbd" /><path d="M0.0 29.2L18.4 29.2L18.4 46.9L0.0 46.9z" fill="#dcdcdc" /><path d="M18.4 29.2L36.1 29.2L36.1 46.9L18.4 46.9z" fill="#e2e2e2" /><path d="M0 28.500v18.400h36.100l5.400-5.400v-17.300h-17M18.400 29.200v17.700M36.100 29.200v17.700M18.400 29.200h17.700l5.400-5" fill="none" stroke="#7a7a7a" stroke-width="1.1" stroke-linejoin="round"/><path d="M0.0 12.2L6.1 6.0L23.8 6.0L18.4 12.2z" fill="#8fcbf6" /><path d="M18.4 12.2L23.8 6.0L23.8 24.4L18.4 28.8z" fill="#4592cc" /><path d="M0.0 12.2L18.4 12.2L18.4 28.8L0.0 28.8z" fill="#69aee3" /><path d="M34.7 0.2L36.7 7.4L41.5 5.4L39.5 10.2L46.7 12.2L39.5 14.2L41.5 19.0L36.7 17.0L34.7 24.2L32.7 17.0L27.9 19.0L29.9 14.2L22.7 12.2L29.9 10.2L27.9 5.4L32.7 7.4z" fill="#f7a600" stroke="#f9bd4a" stroke-width="0.7" stroke-linejoin="round" /></g>
<g transform="translate(1201.8 119.4)"><path d="M0.800 11.800L9.700 3c1.500-2 8-2.500 9.300 0V16.800c-1.500 1.500-4 1.500-5.100 1.700V28.500L1.300 40.300z" fill="#c6c6c6" stroke="#7a7a7a" stroke-width="1.100" stroke-linejoin="round"/><path d="M9.700 3c1-2 8-2.500 9.300 0v13.800c-1.500 1.500-4 1.500-5.100 1.700l-4.200-3z" fill="#dedede" stroke="#7a7a7a" stroke-width="1.100" stroke-linejoin="round"/><ellipse cx="14.300" cy="3.300" rx="3.300" ry="1.300" fill="#f4f4f4" stroke="#7a7a7a" stroke-width="0.800"/><path d="M30.700 4.200L41.600 13.400V41.100L30.700 31.900z" fill="#dcdcdc" stroke="#7a7a7a" stroke-width="1.100" stroke-linejoin="round"/><path d="M23.100 20.100c1-2.500 6.500-2.500 7.600-0.500V31.900c-2 1.500-6 1-7.600-0.900z" fill="#c6c6c6" stroke="#7a7a7a" stroke-width="1.100" stroke-linejoin="round"/><path d="M14.800 19.300v7.600M27.800 9.200v8.400" stroke="#2f8fe0" stroke-width="1.400"/></g>
<g transform="translate(1314.7 116.4)"><path d="M0.5 13.9L15.1 0.5L26.0 0.5L13.4 13.9z" fill="#f6f6f6" /><path d="M0.5 13.9L13.4 13.9L13.4 45.8L0.5 45.8z" fill="#dedede" /><path d="M13.400 45.800H0.500V13.900L15.100 0.500H26" fill="none" stroke="#6a6a6a" stroke-width="1.200" stroke-linejoin="round"/><path d="M13.4 13.9L26.5 0.8L26.5 32.9L13.4 46.0z" fill="#5cc183" /><path d="M31.5 13.9L44.9 0.8L44.9 32.9L31.5 46.0z" fill="#e79b66" /></g>
<g transform="translate(1429.0 118.0)"><path d="M12.9 0.2L24.6 7.3L12.9 14.0L1.2 7.3z" fill="#f6c39e" /><path d="M1.2 7.3L12.9 14.0L12.9 26.0L1.2 19.5z" fill="#eeae80" /><path d="M12.9 14.0L24.6 7.3L24.6 19.5L12.9 26.0z" fill="#e39a68" /><path d="M31.0 3.4L21.3 20.7L31.0 35.0z" fill="#62ade3" /><path d="M31.0 3.4L45.6 27.4L31.0 35.0z" fill="#3f8fcc" /><circle cx="17.600" cy="32.400" r="12" fill="#a97ee6"/><path d="M6 35.500a12 12 0 0 0 23.200 0c-7 3-16 3-23.200 0z" fill="#9667d6"/></g>
<g transform="translate(1495.4 127.5)"><path d="M1 1.100v12.600M42.100 1.100v12.600M4 7.900h35" stroke="#5a5a5a" stroke-width="1.200" fill="none"/><path d="M2.200 7.900l5.500-2.800v5.600zM40.900 7.900l-5.500-2.800v5.600z" fill="#5a5a5a"/><rect x="0.700" y="16.200" width="41.800" height="8.400" fill="#f7a600"/><path d="M4.9 16.200v3.6M9.1 16.200v2.4M13.2 16.200v3.6M17.4 16.200v2.4M21.6 16.200v3.6M25.8 16.200v2.4M30.0 16.200v3.6M34.1 16.200v2.4M38.3 16.200v3.6" stroke="#8a5a00" stroke-width="0.900"/></g>
<g transform="translate(1574.9 119.0)"><path d="M7.1 13.0L18.0 0.8L45.1 0.8L34.7 13.0z" fill="#fbfbfb" /><path d="M34.7 13.0L45.1 0.8L45.1 29.8L34.7 40.7z" fill="#c8c9ce" /><path d="M7.1 13.0L34.7 13.0L34.7 40.7L7.1 40.7z" fill="#e5e6e8" /><path d="M7.100 13L18 0.800H45.100V29.800L34.700 40.700H7.100z" fill="none" stroke="#404040" stroke-width="1.300" stroke-linejoin="round"/><path d="M-0.500 33.500C2 26 7 22.500 13.800 22.300V17.200L25.500 25.600 13.800 34.600V29.400C8 29 3.500 30.500-0.500 33.500z" fill="#3c3f45" stroke="#f4f4f4" stroke-width="1.400" stroke-linejoin="round"/></g>
<g transform="translate(1640.3 118.0)"><rect x="0.500" y="0.600" width="42.400" height="42.400" fill="#8fcbf6" stroke="#4a97d2" stroke-width="1"/><circle cx="31.100" cy="11.800" r="4.800" fill="#ffffd0"/><path d="M0.500 27C5 21 10 17 14.600 18.200C20 19.500 23 31 28 33C31 33 33 27.500 35.600 26.900C38.500 27 40.500 31 42.900 34V43H0.500z" fill="#3d90cc"/></g>
<g transform="translate(1733.6 115.9)"><rect x="1" y="1" width="41.700" height="32.500" fill="none" stroke="#2fb65a" stroke-width="2" stroke-dasharray="5.500 4"/><path d="M32 21.100V41l4.700-4.200 3.600 8.200 3.800-1.700-3.600-8 6.300-0.300z" fill="#fdfdfd" stroke="#3a3a3a" stroke-width="1.500" stroke-linejoin="round"/></g>
<rect x="-1.0" y="205.5" width="449.5" height="36.0" fill="#f2f2f2" stroke="#cfcfcf" stroke-width="1" />
<path d="M6.600 224.300l7.500-4.600v9.200zM14.200 224.300l7.500-4.600v9.200z" fill="#333"/>
<text x="36.9" y="228.8" font-size="16" textLength="77.9" lengthAdjust="spacingAndGlyphs" fill="#5c5c5c" font-weight="normal" >BROWSER</text>
<circle cx="424.100" cy="223.800" r="6.600" fill="#222"/><path d="M420.300 223.800h7.600" stroke="#f2f2f2" stroke-width="1.800"/>
<path d="M442.0 216.5V231.5M445.0 216.5V231.5" stroke="#8a8a8a" stroke-width="1.100"/>
<rect x="53.1" y="250.4" width="221.3" height="29.1" fill="#f1f1f1" />
<rect x="80.2" y="286.1" width="200.5" height="29.5" fill="#f1f1f1" />
<rect x="80.2" y="322.3" width="164.3" height="29.5" fill="#f1f1f1" />
<rect x="80.2" y="358.1" width="141.5" height="29.4" fill="#f1f1f1" />
<rect x="80.2" y="393.8" width="172.2" height="29.9" fill="#f1f1f1" />
<defs><linearGradient id="tg" x1="0" y1="1" x2="1" y2="0"><stop offset="0" stop-color="#bbb"/><stop offset="1" stop-color="#6a6a6a"/></linearGradient></defs>
<path d="M25.200 272.900h15.700v-16.200z" fill="url(#tg)" stroke="#333" stroke-width="1.400" stroke-linejoin="round"/>
<path d="M57.8 265.0c5-9.500 18.600-9.500 23.600 0c-5 9.500-18.600 9.500-23.600 0z" fill="#8c8c8c"/><circle cx="69.6" cy="265.0" r="5" fill="#f2f2f2"/><circle cx="69.6" cy="265.0" r="2.800" fill="#8c8c8c"/>
<rect x="90.4" y="253.1" width="147.0" height="23.5" fill="#8f8f8f" />
<g stroke="#3a3a3a" stroke-width="1.100" stroke-linejoin="round"><path d="M95.600 258.500h16.500v17.300h-16.500z" fill="#e3e5ea"/><path d="M95.600 258.500l5.800-4.600h16.500l-5.800 4.600z" fill="#fbfbfc"/><path d="M112.100 258.500l5.800-4.600v17l-5.800 4.900z" fill="#c9ccd3"/></g>
<text x="140.4" y="270.8" font-size="16.5" textLength="82.1" lengthAdjust="spacingAndGlyphs" fill="#ffffff" font-weight="bold" >(Unsaved)</text>
<circle cx="252.800" cy="265.600" r="9" fill="#fafafa" stroke="#222" stroke-width="1.500"/><circle cx="252.800" cy="265.600" r="3.600" fill="#222"/>
<path d="M53.5 292.6l13.300 9-13.300 9z" fill="#e2e2e4" stroke="#333" stroke-width="1.700" stroke-linejoin="round"/>
<path d="M105.4 299.0L108.6 299.3L108.6 302.5L105.4 302.8L104.2 305.7L106.2 308.2L104.0 310.4L101.5 308.4L98.6 309.6L98.3 312.8L95.1 312.8L94.8 309.6L91.9 308.4L89.4 310.4L87.2 308.2L89.2 305.7L88.0 302.8L84.8 302.5L84.8 299.3L88.0 299.0L89.2 296.1L87.2 293.6L89.4 291.4L91.9 293.4L94.8 292.2L95.1 289.0L98.3 289.0L98.6 292.2L101.5 293.4L104.0 291.4L106.2 293.6L104.2 296.1z" fill="#8c8c8c" stroke="#8c8c8c" stroke-width="1" stroke-linejoin="round"/><circle cx="96.7" cy="300.9" r="4.3" fill="#f2f2f2"/>
<text x="129.7" y="307.0" font-size="16.5" textLength="134.5" lengthAdjust="spacingAndGlyphs" fill="#333" font-weight="normal" >Document Settings</text>
<path d="M53.5 328.2l13.300 9-13.300 9z" fill="#e2e2e4" stroke="#333" stroke-width="1.700" stroke-linejoin="round"/>
<path d="M84.6 327.0h10.500l1.200 3h12.200v16.200h-23.900z" fill="#8c8c8c"/><path d="M85.1 330.6h11" stroke="#f2f2f2" stroke-width="0.900"/>
<text x="129.7" y="342.6" font-size="16.5" textLength="101.4" lengthAdjust="spacingAndGlyphs" fill="#333" font-weight="normal" >Named Views</text>
<path d="M53.5 364.0l13.300 9-13.300 9z" fill="#e2e2e4" stroke="#333" stroke-width="1.700" stroke-linejoin="round"/>
<path d="M85.2 372.7c5-9 18-9 23 0c-5 9-18 9-23 0z" fill="none" stroke="#8c8c8c" stroke-width="1.200"/><circle cx="96.7" cy="372.7" r="4.600" fill="none" stroke="#8c8c8c" stroke-width="1.200"/><path d="M88.7 364.2l16.500 17" stroke="#8c8c8c" stroke-width="1.200"/>
<path d="M121.9 363.0h10.500l1.200 3h12.200v16.200h-23.900z" fill="#8c8c8c"/><path d="M122.4 366.6h11" stroke="#f2f2f2" stroke-width="0.900"/>
<text x="167.5" y="378.3" font-size="16.5" textLength="40.8" lengthAdjust="spacingAndGlyphs" fill="#333" font-weight="normal" >Origin</text>
<path d="M53.5 400.0l13.300 9-13.300 9z" fill="#e2e2e4" stroke="#333" stroke-width="1.700" stroke-linejoin="round"/>
<path d="M84.9 408.8c5-9.500 18.600-9.500 23.600 0c-5 9.500-18.600 9.500-23.600 0z" fill="#8c8c8c"/><circle cx="96.7" cy="408.8" r="5" fill="#f2f2f2"/><circle cx="96.7" cy="408.8" r="2.800" fill="#8c8c8c"/>
<path d="M121.9 398.8h10.500l1.200 3h12.200v16.200h-23.900z" fill="#8c8c8c"/><path d="M122.4 402.4h11" stroke="#f2f2f2" stroke-width="0.900"/>
<text x="167.5" y="414.4" font-size="16.5" textLength="66.5" lengthAdjust="spacingAndGlyphs" fill="#333" font-weight="normal" >Sketches</text>
<path d="M118.5 421l4.200-4.800M127.2 421l4.200-4.800M136.0 421l4.200-4.800M144.8 421l4.200-4.800M153.5 421l4.200-4.800M162.2 421l4.200-4.800M171.0 421l4.200-4.800M179.8 421l4.200-4.800M188.5 421l4.200-4.800M197.2 421l4.200-4.800M206.0 421l4.200-4.800M214.8 421l4.200-4.800M223.5 421l4.200-4.800M232.2 421l4.200-4.800M241.0 421l4.200-4.800" stroke="#6c8cb8" stroke-width="2.600" fill="none"/>
<rect x="758.2" y="205.7" width="389.6" height="34.8" fill="#f2f2f2" />
<path d="M775.400 212l11.600 20.500h-23.200z" fill="#f9a21a" stroke="#f9a21a" stroke-width="1.500" stroke-linejoin="round"/><path d="M775.400 217v8.500" stroke="#fff" stroke-width="2.600"/><circle cx="775.400" cy="229.300" r="1.500" fill="#fff"/>
<text x="795.9" y="228.8" font-size="16.5" textLength="75.4" lengthAdjust="spacingAndGlyphs" fill="#333" font-weight="bold" >Unsaved:</text>
<text x="900.9" y="228.8" font-size="16.5" textLength="151.7" lengthAdjust="spacingAndGlyphs" fill="#333" font-weight="normal" >Changes may be lost</text>
<rect x="1072.3" y="206.0" width="1.6" height="34.0" fill="#d9d9d9" />
<text x="1093.2" y="228.8" font-size="16.5" textLength="36.8" lengthAdjust="spacingAndGlyphs" fill="#0a78c8" font-weight="normal" >Save</text>
<rect x="788.9" y="441.4" width="211.2" height="19.7" fill="#f9f9f9" stroke="#767676" stroke-width="1" />
<text x="793.4" y="457.3" font-size="16.8" textLength="200.4" lengthAdjust="spacingAndGlyphs" fill="#0a0a14" font-weight="normal" >Hold Ctrl to modify selection</text>
<g stroke="#8a8a8a" stroke-width="1" stroke-linejoin="round" stroke-dasharray="5 1.500"><path d="M1814.600 252.200L1826.100 233L1873.700 235.800L1868.700 256z" fill="#e9e9e9" fill-opacity="0.800"/><path d="M1868.700 256L1873.700 235.800L1872 280.600L1866.600 301.400z" fill="#dcdcdc" fill-opacity="0.800"/><path d="M1814.600 252.200L1868.700 256L1866.600 301.400L1816.800 298.100z" fill="#e4e4e4" fill-opacity="0.800"/></g>
<text transform="matrix(1 0.070 -0.020 1 1823.400 282.300)" font-size="11.500" fill="#858585" textLength="36.500" lengthAdjust="spacingAndGlyphs">FRONT</text>
<text transform="matrix(1 0.060 -0.600 0.600 1838 246.500)" font-size="11" fill="#b4b4b4" textLength="22" lengthAdjust="spacingAndGlyphs">TOP</text>
<path d="M1816.800 298.100L1813 244.500" stroke="#5a5af0" stroke-width="2.400"/>
<path d="M1816.800 298.100L1876.400 305.200" stroke="#e67a7a" stroke-width="2.400"/>
<text x="1807.500" y="241.500" font-size="13" font-weight="bold" fill="#8c8cff">Z</text>
<text x="1878.300" y="311" font-size="13" font-weight="bold" fill="#ff9a9a">X</text>
<rect x="1533.0" y="330.2" width="373.0" height="468.0" fill="#f2f2f2" stroke="#cdcdcd" stroke-width="1.4" />
<rect x="1533.5" y="365.0" width="372.0" height="1.3" fill="#d2d2d2" />
<path d="M1536.0 340.0V355.3M1539.0 340.0V355.3" stroke="#8a8a8a" stroke-width="1.100"/>
<circle cx="1556.700" cy="347.400" r="6.800" fill="#222"/><path d="M1552.700 347.400h8" stroke="#f2f2f2" stroke-width="1.900"/>
<text x="1569.6" y="352.8" font-size="16" textLength="68.4" lengthAdjust="spacingAndGlyphs" fill="#5a5a5a" font-weight="normal" >EXTRUDE</text>
<path d="M1884.800 344.200l7.200 4.100-7.200 4.100zM1892.200 344.200l7.200 4.100-7.200 4.100z" fill="#222"/>
<text x="1551.4" y="394.9" font-size="16.5" textLength="34.5" lengthAdjust="spacingAndGlyphs" fill="#333" font-weight="normal" >Type</text>
<text x="1551.4" y="439.9" font-size="16.5" textLength="53.9" lengthAdjust="spacingAndGlyphs" fill="#333" font-weight="normal" >Profiles</text>
<text x="1551.4" y="484.9" font-size="16.5" textLength="34.6" lengthAdjust="spacingAndGlyphs" fill="#333" font-weight="normal" >Start</text>
<text x="1551.4" y="529.8" font-size="16.5" textLength="62.6" lengthAdjust="spacingAndGlyphs" fill="#333" font-weight="normal" >Direction</text>
<text x="1551.4" y="574.7" font-size="16.5" textLength="84.1" lengthAdjust="spacingAndGlyphs" fill="#333" font-weight="normal" >Extent Type</text>
<text x="1551.4" y="620.5" font-size="16.5" textLength="62.9" lengthAdjust="spacingAndGlyphs" fill="#333" font-weight="normal" >Distance</text>
<text x="1551.4" y="665.1" font-size="16.5" textLength="85.3" lengthAdjust="spacingAndGlyphs" fill="#333" font-weight="normal" >Taper Angle</text>
<text x="1551.4" y="724.4" font-size="16.5" textLength="70.1" lengthAdjust="spacingAndGlyphs" fill="#333" font-weight="normal" >Operation</text>
<rect x="1659.8" y="368.6" width="35.0" height="40.6" fill="#0696d7" rx="3" />
<g transform="translate(1665.700 377.500)"><path d="M0 3.500l2.500-3h14.500l-2.500 3z" fill="#c2e4fc"/><path d="M14.500 3.500l2.500-3v15.500l-2.500 3z" fill="#6db2e6"/><rect x="0" y="3.500" width="14.500" height="15.500" fill="#8fcbf6"/><path d="M0 19.400h14.500l2.500-3v1.800l-2.500 3h-14.500z" fill="#dedede"/><path d="M21.800 3v16" stroke="#fff" stroke-width="1.400"/><path d="M21.800 0.500l2.300 4h-4.600z" fill="#fff"/></g>
<g transform="translate(1708.300 377.100)"><path d="M1 3.500l3-3h14l-3 3z" fill="#7ab9ea"/><path d="M1 3.500h6l1 1.500 7-1.500v15l-3.500 2-3.500-2.500-3.500 2.500-3.500-2z" fill="#4a96d0"/><path d="M15 3.500l3-3v14.500l-3 3.500z" fill="#3b7fb8"/><path d="M1 20.500l3.500 2 3.500-2.500 3.500 2.500 3.500-2 3-3.500" fill="none" stroke="#c9c9c9" stroke-width="1.600"/><path d="M22.500 3.500v15.500" stroke="#222" stroke-width="1.400"/><path d="M22.500 0.800l2.300 4h-4.600z" fill="#222"/></g>
<rect x="1659.8" y="413.6" width="117.4" height="40.8" fill="#0696d7" rx="3" />
<path d="M1671.500 422.300v19.500l4.500-4 3.400 7.800 3.600-1.600-3.400-7.600 6-0.300z" fill="#e9e9e9" stroke="#3a3a3a" stroke-width="1.300" stroke-linejoin="round"/>
<text x="1693.4" y="439.9" font-size="16.5" textLength="74.3" lengthAdjust="spacingAndGlyphs" fill="#ffffff" font-weight="normal" >1 selected</text>
<path d="M1795.300 428.800l11 11M1806.300 428.800l-11 11" stroke="#4a4a4a" stroke-width="2.700"/>
<rect x="1660.6" y="459.3" width="196.5" height="39.3" fill="#ffffff" stroke="#d6d6d6" stroke-width="1.4" rx="3" />
<path d="M1841.2 476.9h8.5l-4.2 5.5z" fill="#222"/>
<path d="M1669.800 466.500v24" stroke="#1d2d5a" stroke-width="2.200"/><path d="M1671 478.600h10" stroke="#222" stroke-width="1.500"/><path d="M1679.500 474.800l5.500 3.800-5.500 3.800z" fill="#222"/>
<text x="1695.9" y="484.9" font-size="16.5" textLength="87.4" lengthAdjust="spacingAndGlyphs" fill="#333" font-weight="normal" >Profile Plane</text>
<rect x="1660.6" y="504.4" width="196.5" height="39.3" fill="#ffffff" stroke="#d6d6d6" stroke-width="1.4" rx="3" />
<path d="M1841.2 521.9h8.5l-4.2 5.5z" fill="#222"/>
<path d="M1675 510.500l12.800 3.200v11.500l-12.800-3.500z" fill="#f0b080"/><path d="M1678 520l-11.500 12" stroke="#555" stroke-width="1.500"/><path d="M1665.400 533.500l1.500-6 4 4.200z" fill="#555"/>
<text x="1695.9" y="529.8" font-size="16.5" textLength="65.4" lengthAdjust="spacingAndGlyphs" fill="#333" font-weight="normal" >One Side</text>
<rect x="1660.6" y="549.6" width="196.5" height="39.3" fill="#ffffff" stroke="#d6d6d6" stroke-width="1.4" rx="3" />
<path d="M1841.2 567.1h8.5l-4.2 5.5z" fill="#222"/>
<path d="M1666.500 558v23M1688.500 558v23" stroke="#1d2d5a" stroke-width="2"/><path d="M1669.500 569.500h16" stroke="#222" stroke-width="1.400"/><path d="M1667.800 569.500l5-3.400v6.800zM1687.200 569.500l-5-3.400v6.800z" fill="#222"/>
<text x="1695.9" y="574.7" font-size="16.5" textLength="62.0" lengthAdjust="spacingAndGlyphs" fill="#333" font-weight="normal" >Distance</text>
<rect x="1661.5" y="595.8" width="195.5" height="37.4" fill="#ffffff" stroke="#bdbdbd" stroke-width="1.3" />
<text x="1665.7" y="620.5" font-size="16.5" textLength="60.3" lengthAdjust="spacingAndGlyphs" fill="#333" font-weight="normal" >8.00 mm</text>
<rect x="1661.5" y="641.0" width="195.5" height="37.4" fill="#ffffff" stroke="#bdbdbd" stroke-width="1.3" />
<text x="1665.7" y="665.1" font-size="16.5" textLength="53.8" lengthAdjust="spacingAndGlyphs" fill="#333" font-weight="normal" >0.0 deg</text>
<rect x="1535.4" y="688.7" width="350.5" height="4.2" fill="#c9c9c9" />
<rect x="1660.6" y="700.0" width="196.5" height="39.3" fill="#ffffff" stroke="#d6d6d6" stroke-width="1.4" rx="3" />
<path d="M1841.2 717.5h8.5l-4.2 5.5z" fill="#222"/>
<path d="M1666.300 711.500v17.500c0 4.500 16.500 4.500 16.500 0v-17.500z" fill="#e0e0e0" stroke="#6a6a6a" stroke-width="1.100"/><ellipse cx="1674.500" cy="711.500" rx="8.200" ry="3" fill="#f4f4f4" stroke="#6a6a6a" stroke-width="1.100"/>
<path d="M1683.5 704.0L1684.5 708.4L1687.3 707.0L1685.9 709.8L1690.3 710.8L1685.9 711.8L1687.3 714.6L1684.5 713.2L1683.5 717.6L1682.5 713.2L1679.7 714.6L1681.1 711.8L1676.7 710.8L1681.1 709.8L1679.7 707.0L1682.5 708.4z" fill="#f7a600" stroke="#f9bd4a" stroke-width="0.7" stroke-linejoin="round" />
<text x="1695.9" y="724.4" font-size="16.5" textLength="75.4" lengthAdjust="spacingAndGlyphs" fill="#333" font-weight="normal" >New Body</text>
<rect x="1533.5" y="743.7" width="372.0" height="1.2" fill="#d2d2d2" />
<circle cx="1554.300" cy="772" r="8.800" fill="#111"/><path d="M1554.300 770.500v6.500" stroke="#fff" stroke-width="2.600"/><circle cx="1554.300" cy="767.300" r="1.600" fill="#fff"/>
<rect x="1694.5" y="757.8" width="88.8" height="27.0" fill="#e1e1e1" stroke="#adadad" stroke-width="1.2" />
<text x="1725.8" y="777.8" font-size="18.5" textLength="24.5" lengthAdjust="spacingAndGlyphs" fill="#444" font-weight="normal" >OK</text>
<rect x="1799.5" y="757.8" width="88.8" height="27.0" fill="#e1e1e1" stroke="#adadad" stroke-width="1.2" />
<text x="1814.3" y="777.8" font-size="18.5" textLength="57.7" lengthAdjust="spacingAndGlyphs" fill="#444" font-weight="normal" >Cancel</text>
<rect x="934.0" y="506.3" width="161.0" height="31.8" fill="#f0f0f0" />
<path d="M941 507.500l2.500 2.500-2.500 2.500 2.500 2.500-2.500 2.500 2.500 2.500-2.500 2.500 2.500 2.500-2.500 2.500 2.500 2.500-2.500 2.500 2.500 2.500" stroke="#dcdcdc" stroke-width="1" fill="none"/>
<rect x="949.4" y="507.0" width="1.8" height="30.5" fill="#cfcfcf" />
<rect x="955.8" y="508.8" width="102.1" height="27.2" fill="#ffffff" stroke="#c4c4c4" stroke-width="1.1" />
<rect x="976.2" y="512.1" width="61.8" height="20.5" fill="#0078d7" />
<rect x="1036.7" y="512.1" width="1.3" height="20.5" fill="#111" />
<text x="977.2" y="528.9" font-size="17" textLength="58.8" lengthAdjust="spacingAndGlyphs" fill="#ffffff" font-weight="normal" >8.00 mm</text>
<circle cx="1077.400" cy="514.2" r="2" fill="#8a8a8a"/>
<circle cx="1077.400" cy="521.7" r="2" fill="#8a8a8a"/>
<circle cx="1077.400" cy="529.3" r="2" fill="#8a8a8a"/>
<rect x="-1.0" y="894.8" width="449.5" height="37.2" fill="#f2f2f2" stroke="#cfcfcf" stroke-width="1" />
<text x="36.9" y="919.4" font-size="16" textLength="84.5" lengthAdjust="spacingAndGlyphs" fill="#5c5c5c" font-weight="normal" >COMMENTS</text>
<circle cx="424" cy="913.700" r="6.600" fill="#222"/><path d="M420.200 913.700h7.600M424 909.900v7.600" stroke="#f2f2f2" stroke-width="1.700"/>
<path d="M442.0 906.0V921.0M445.0 906.0V921.0" stroke="#8a8a8a" stroke-width="1.100"/>
<rect x="775.4" y="896.1" width="355.3" height="35.5" fill="#f0f0f0" />
<path d="M792.300 902l-3.600 5h2.200v18.500h2.800v-18.500h2.200z" fill="#fff" stroke="#333" stroke-width="1.100" stroke-linejoin="round"/>
<path d="M788.500 910.800c-5 0.800-8 2.300-8 3.900 0 2.500 5.300 4.400 11.800 4.400s11.800-1.900 11.800-4.400c0-1.600-3-3.100-8-3.900" fill="none" stroke="#333" stroke-width="1.800"/>
<path d="M781 918.500l6.500-3.500v7z" fill="#222"/>
<path d="M811.5 911.5h8l-4.0 5z" fill="#333"/>
<path d="M831 909.500l6-3.500 1 2 5-4 1 3 5-3.500v6" fill="none" stroke="#555" stroke-width="1.300"/>
<rect x="830" y="910" width="22.500" height="14.500" fill="#fdfdfd" stroke="#555" stroke-width="1.800"/><rect x="835" y="915" width="12.600" height="5.800" fill="#aab2c0" stroke="#555" stroke-width="1"/>
<g transform="translate(880.500 0) scale(1.220 1) translate(-879 0)"><path d="M874.500 925c-2-3-4.500-6.500-5.500-9.500-0.500-1.500 1.500-2.300 2.600-1l2.400 3v-11c0-1.800 2.500-1.800 2.600 0v-2.500c0-1.800 2.800-1.800 2.800 0v0.500c0-1.800 2.800-1.800 2.800 0v2c0-1.600 2.600-1.600 2.600 0v10c0 3.500-1 6-2 8.500z" fill="#fff" stroke="#333" stroke-width="1.200" stroke-linejoin="round"/><path d="M877.100 906v7M879.900 904.500v8.500M882.700 905.500v7.500" stroke="#333" stroke-width="0.900"/></g>
<path d="M918.800 916.700l6.500 6.500" stroke="#333" stroke-width="3.200" stroke-linecap="round"/><circle cx="914.500" cy="912.200" r="6.200" fill="#dfeaea" stroke="#444" stroke-width="1.500"/>
<path d="M925 905.500h6M928 902.500v6M925 911h6" stroke="#333" stroke-width="1.300"/>
<rect x="947" y="903" width="22.500" height="22" fill="none" stroke="#333" stroke-width="1.300" stroke-dasharray="3 2"/>
<path d="M962.500 917.500l6.500 6.500" stroke="#333" stroke-width="3.600" stroke-linecap="round"/><circle cx="956.200" cy="911.300" r="8.800" fill="#dfeaea" stroke="#444" stroke-width="1.600"/>
<path d="M978.3 911.5h8l-4.0 5z" fill="#333"/>
<rect x="997" y="903" width="22" height="16.500" rx="1.500" fill="#d8d8d8" stroke="#555" stroke-width="1.400"/><rect x="999.800" y="905.600" width="16.400" height="11" fill="#8fb1e6" stroke="#5a78b0" stroke-width="0.800"/><path d="M1005 919.500h6l1.500 3h-9z" fill="#888"/><path d="M1001.500 923.500h13" stroke="#555" stroke-width="1.600"/>
<path d="M1023.0 911.5h8l-4.0 5z" fill="#333"/>
<defs><linearGradient id="gg" x1="0" x2="0" y1="0" y2="1"><stop offset="0" stop-color="#4a4a4a"/><stop offset="1" stop-color="#8a8a90"/></linearGradient></defs>
<rect x="1042.400" y="902.500" width="23.300" height="22.700" fill="url(#gg)"/>
<path d="M1046.3 902.500v22.700M1042.400 906.3h23.300M1050.2 902.500v22.700M1042.400 910.1h23.300M1054.0 902.500v22.700M1042.400 913.8h23.300M1057.9 902.500v22.700M1042.400 917.6h23.300M1061.8 902.500v22.700M1042.400 921.4h23.300" stroke="#e6e6e6" stroke-width="0.900"/>
<path d="M1070.0 911.5h8l-4.0 5z" fill="#333"/>
<rect x="1089.500" y="904.300" width="21.800" height="18.300" rx="1.500" fill="#a9c2ec" stroke="#4f74c0" stroke-width="1.600"/><path d="M1100.400 904.300v18.300M1089.500 913.500h21.800" stroke="#4f74c0" stroke-width="2"/>
<path d="M1116.3 911.5h8l-4.0 5z" fill="#333"/>
<text x="1638.6" y="919.7" font-size="16.5" textLength="247.3" lengthAdjust="spacingAndGlyphs" fill="#2e2e2e" font-weight="bold" >1 Profile | Area : 587.478 mm^2</text>
<rect x="0.0" y="938.5" width="1908.0" height="3.0" fill="#d2d2d2" />
<rect x="0.0" y="941.5" width="1908.0" height="65.0" fill="#f2f2f2" />
<path d="M10 967.500v20.500" stroke="#333" stroke-width="2.600"/><path d="M27.500 967.300v21l-15-10.500z" fill="#333"/>
<path d="M59.500 969.500l-14.200 8.300 14.200 8.300z" fill="#333"/><path d="M63.700 972.500v11" stroke="#333" stroke-width="3"/>
<path d="M84 965.500v25l18.500-12.500z" fill="#333"/>
<path d="M126 969.500l14.200 8.300-14.200 8.300z" fill="#333"/><path d="M121.800 972.500v11" stroke="#333" stroke-width="3"/>
<path d="M176.500 967.500v20.500" stroke="#333" stroke-width="2.600"/><path d="M159.300 967.300v21l15-10.500z" fill="#333"/>
<rect x="223.8" y="994.0" width="2.6" height="9.0" fill="#c8c8c8" />
<rect x="205.6" y="958.3" width="36.0" height="36.0" fill="#0696d7" rx="3" />
<rect x="213.500" y="966.300" width="17" height="17" fill="none" stroke="#4a5a6a" stroke-width="1.400" stroke-dasharray="4.500 2"/>
<path d="M226 985.500l1.500-4.500 7-7.500 3.500 3.200-7 7.500z" fill="#f6c650" stroke="#0696d7" stroke-width="0.600"/><path d="M234.500 973.500l1.800-1.800 3.500 3.200-1.800 1.800z" fill="#e8505a"/>
<path d="M233 955.600h18l0 5.200-7.300 8h-3.400l-7.300-8z" fill="#666"/><rect x="240.300" y="966" width="3.300" height="37.500" fill="#666"/>
<path d="M1890.2 976.3L1893.4 976.6L1893.4 979.8L1890.2 980.1L1889.0 983.0L1891.0 985.5L1888.8 987.7L1886.3 985.7L1883.4 986.9L1883.1 990.1L1879.9 990.1L1879.6 986.9L1876.7 985.7L1874.2 987.7L1872.0 985.5L1874.0 983.0L1872.8 980.1L1869.6 979.8L1869.6 976.6L1872.8 976.3L1874.0 973.4L1872.0 970.9L1874.2 968.7L1876.7 970.7L1879.6 969.5L1879.9 966.3L1883.1 966.3L1883.4 969.5L1886.3 970.7L1888.8 968.7L1891.0 970.9L1889.0 973.4z" fill="#8a8a8a" stroke="#8a8a8a" stroke-width="1" stroke-linejoin="round"/><circle cx="1881.5" cy="978.2" r="4.3" fill="#f2f2f2"/>
</svg>
</body></html>
